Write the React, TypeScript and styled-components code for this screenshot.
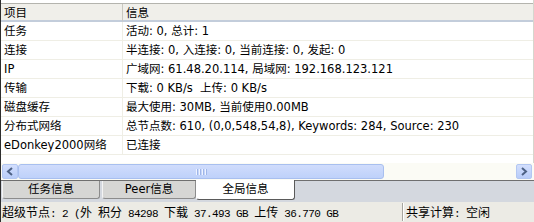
import React from "react";
import styled, { createGlobalStyle } from "styled-components";

const GlobalStyle = createGlobalStyle`
  html, body {
    margin: 0;
    padding: 0;
    background: #fff;
  }
`;

const Window = styled.div`
  width: 534px;
  height: 222px;
  box-sizing: border-box;
  border-left: 1px solid #2e2e2e;
  display: flex;
  flex-direction: column;
  overflow: hidden;
  background: #fff;
  color: #000;
  font-family: "DejaVu Sans", "Noto Sans CJK SC", sans-serif;
  font-size: 11.5px;
`;

const ListView = styled.div`
  height: 163px;
  box-sizing: border-box;
  padding-top: 3px;
  border-right: 1px solid #d6d6ce;
`;

const Grid = styled.div`
  display: grid;
  grid-template-columns: 122px 1fr;
  border-top: 1px solid #b4b4ae;
`;

const HeadCell = styled.div<{ $first?: boolean }>`
  height: 18px;
  line-height: 18px;
  padding-left: 3px;
  box-sizing: border-box;
  background: #f0efea;
  border-bottom: 2px solid #c3cddb;
  border-right: ${(p) => (p.$first ? "1px solid #c9c8c0" : "none")};
  white-space: nowrap;
`;

const Cell = styled.div<{ $first?: boolean }>`
  height: 19px;
  line-height: 18px;
  padding-left: 3px;
  box-sizing: border-box;
  border-bottom: 1px solid #efeee5;
  border-right: ${(p) => (p.$first ? "1px solid #efeee5" : "none")};
  white-space: pre;
  overflow: hidden;
`;

const ScrollBar = styled.div`
  height: 17px;
  display: flex;
  align-items: center;
  padding: 0 2px 0 1px;
  background: #fbfbf5;
`;

const ScrollButton = styled.div<{ $right?: boolean }>`
  width: 16px;
  height: 15px;
  box-sizing: border-box;
  border: 1px solid #b3c7f2;
  border-radius: 2px;
  background: linear-gradient(#d3dffd, #b8ccf9);
  display: flex;
  align-items: center;
  justify-content: center;
  margin-left: ${(p) => (p.$right ? "auto" : "0")};
`;

const Thumb = styled.div`
  width: 366px;
  height: 15px;
  box-sizing: border-box;
  border: 1px solid #a8bfef;
  border-radius: 3px;
  background: linear-gradient(#d0dcfc, #bed1fa);
  display: flex;
  align-items: center;
  justify-content: center;
  gap: 1px;
`;

const Grip = styled.span`
  width: 1px;
  height: 6px;
  background: #eef3ff;
  border-right: 1px solid #9fb6e8;
`;

const TabStrip = styled.div`
  height: 22px;
  box-sizing: border-box;
  border-top: 1px solid #6f6f6f;
  background: #d4d8df;
  display: flex;
  align-items: flex-start;
  padding-left: 1px;
`;

const Tab = styled.div<{ $w: number; $active?: boolean; $gap?: number }>`
  width: ${(p) => p.$w}px;
  height: ${(p) => (p.$active ? 20 : 18)}px;
  margin-top: ${(p) => (p.$active ? -1 : 0)}px;
  margin-right: ${(p) => p.$gap ?? 0}px;
  box-sizing: border-box;
  background: ${(p) => (p.$active ? "#fff" : "#d6d6d4")};
  border-left: 1px solid ${(p) => (p.$active ? "#fff" : "#f4f4f4")};
  border-right: 1px solid ${(p) => (p.$active ? "#5a5a5a" : "#8c8c8c")};
  border-bottom: 1px solid ${(p) => (p.$active ? "#5a5a5a" : "#8c8c8c")};
  border-radius: 0 0 3px 3px;
  text-align: center;
  line-height: ${(p) => (p.$active ? 19 : 17)}px;
  white-space: nowrap;
`;

const StatusBar = styled.div`
  height: 20px;
  display: flex;
  align-items: center;
  background: #ecebe5;
  font-family: "Noto Sans CJK SC", sans-serif;
  font-size: 12px;
  white-space: nowrap;
`;

const Pane = styled.div<{ $w?: number }>`
  width: ${(p) => (p.$w ? `${p.$w}px` : "auto")};
  flex: ${(p) => (p.$w ? "none" : "1")};
  height: 18px;
  line-height: 18px;
  box-sizing: border-box;
  padding-left: ${(p) => (p.$w ? 1 : 3)}px;
  border-right: ${(p) => (p.$w ? "1px solid #a7a6a0" : "none")};
  box-shadow: ${(p) => (p.$w ? "1px 0 0 #fff" : "none")};
  overflow: hidden;
`;

const Mono = styled.span`
  font-family: "Liberation Mono", monospace;
  font-size: 11px;
  letter-spacing: -0.6px;
  white-space: pre;
`;

const rows: [string, string][] = [
  ["任务", "活动: 0, 总计: 1"],
  ["连接", "半连接: 0, 入连接: 0, 当前连接: 0, 发起: 0"],
  ["IP", "广域网: 61.48.20.114, 局域网: 192.168.123.121"],
  ["传输", "下载: 0 KB/s  上传: 0 KB/s"],
  ["磁盘缓存", "最大使用: 30MB, 当前使用0.00MB"],
  ["分布式网络", "总节点数: 610, (0,0,548,54,8), Keywords: 284, Source: 230"],
  ["eDonkey2000网络", "已连接"],
];

const Arrow = ({ right }: { right?: boolean }): JSX.Element => (
  <svg width="8" height="9" viewBox="0 0 8 9">
    <path
      d={right ? "M2 1 L6 4.5 L2 8" : "M6 1 L2 4.5 L6 8"}
      fill="none"
      stroke="#4d6185"
      strokeWidth="2"
    />
  </svg>
);

const App = (): JSX.Element => {
  return (
    <>
      <GlobalStyle />
      <Window>
        <ListView>
          <Grid>
            <HeadCell $first>项目</HeadCell>
            <HeadCell>信息</HeadCell>
            {rows.map(([name, info]) => (
              <React.Fragment key={name}>
                <Cell $first>{name}</Cell>
                <Cell>{info}</Cell>
              </React.Fragment>
            ))}
          </Grid>
        </ListView>
        <ScrollBar>
          <ScrollButton>
            <Arrow />
          </ScrollButton>
          <Thumb>
            <Grip />
            <Grip />
            <Grip />
            <Grip />
          </Thumb>
          <ScrollButton $right>
            <Arrow right />
          </ScrollButton>
        </ScrollBar>
        <TabStrip>
          <Tab $w={98} $gap={2}>任务信息</Tab>
          <Tab $w={94}>Peer信息</Tab>
          <Tab $w={99} $active>
            全局信息
          </Tab>
        </TabStrip>
        <StatusBar>
          <Pane $w={402}>
            超级节点<Mono>: 2 (</Mono>外<Mono> </Mono>积分<Mono> 84298 </Mono>下载
            <Mono> 37.493 GB </Mono>上传<Mono> 36.770 GB</Mono>
          </Pane>
          <Pane>
            共享计算<Mono>: </Mono>空闲
          </Pane>
        </StatusBar>
      </Window>
    </>
  );
};

export default App;
